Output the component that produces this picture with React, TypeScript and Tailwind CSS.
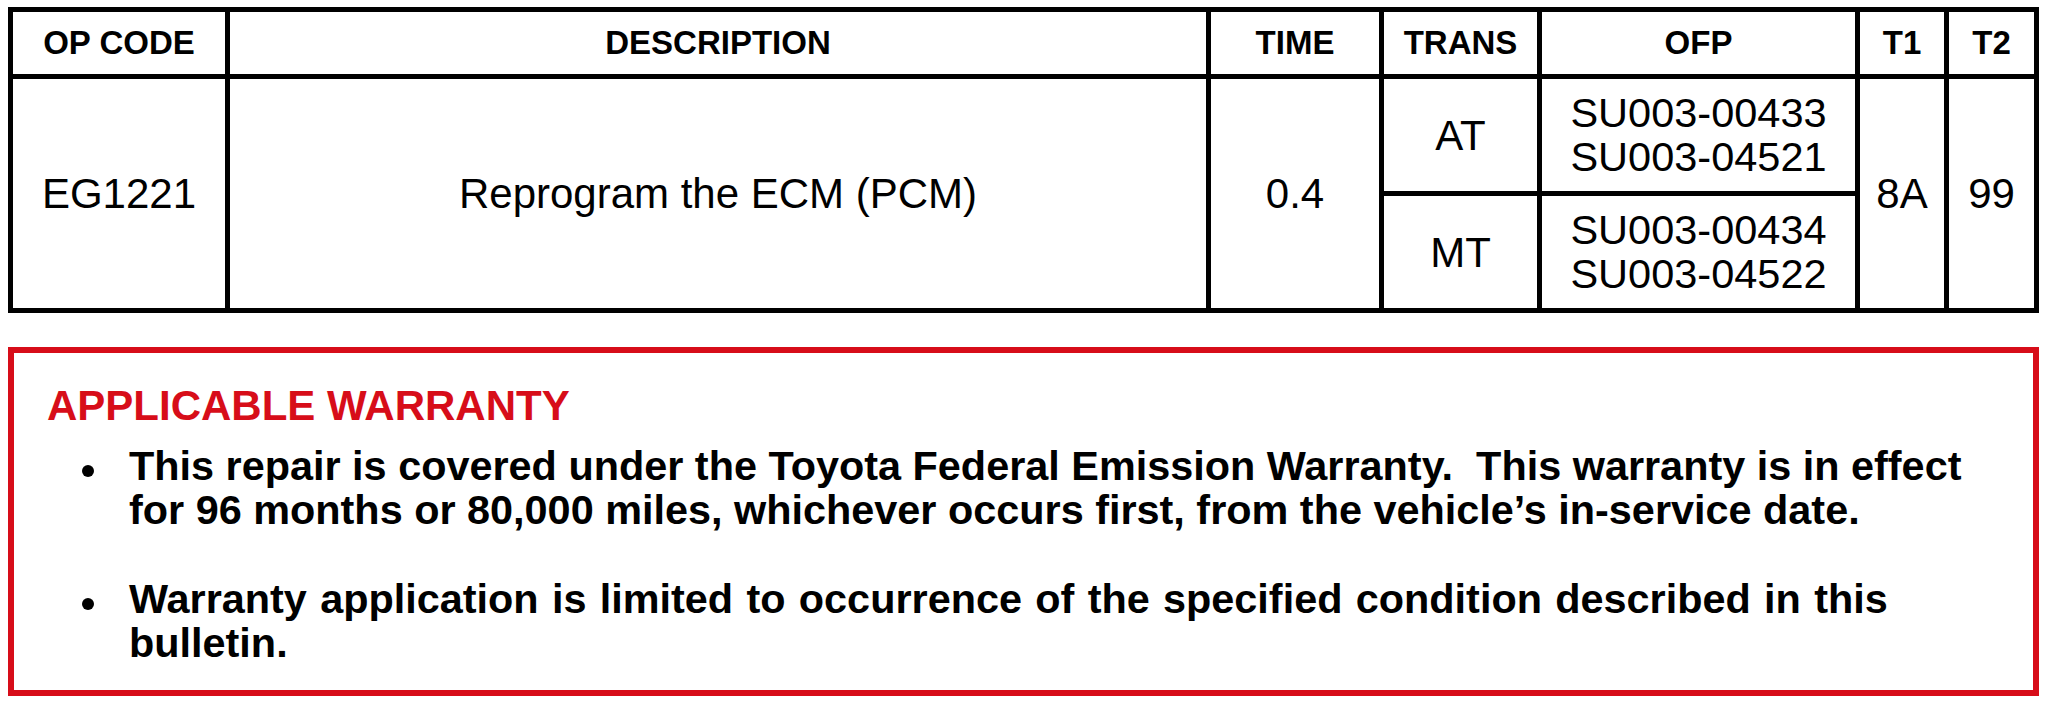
export default function App() {
  const head =
    "bg-white flex items-center justify-center text-[33px] font-bold";
  const cell = "bg-white flex items-center justify-center text-[42px]";
  const ofp =
    "bg-white flex flex-col items-center justify-center text-[41.5px] leading-[44px]";
  return (
    <div className="w-[2047px] h-[703px] bg-white text-black overflow-hidden font-['Liberation_Sans',Arial,sans-serif]">
      <div className="pt-[7px] pl-[8px]">
        <div className="grid w-[2031px] grid-cols-[212px_976px_168px_153px_313px_84px_85px] grid-rows-[62px_112px_112px] gap-[5px] bg-black p-[5px]">
          <div className={`${head} col-start-1 row-start-1`}>OP CODE</div>
          <div className={`${head} col-start-2 row-start-1`}>DESCRIPTION</div>
          <div className={`${head} col-start-3 row-start-1`}>TIME</div>
          <div className={`${head} col-start-4 row-start-1`}>TRANS</div>
          <div className={`${head} col-start-5 row-start-1`}>OFP</div>
          <div className={`${head} col-start-6 row-start-1`}>T1</div>
          <div className={`${head} col-start-7 row-start-1`}>T2</div>

          <div className={`${cell} col-start-1 row-start-2 row-span-2`}>EG1221</div>
          <div className={`${cell} col-start-2 row-start-2 row-span-2`}>
            Reprogram the ECM (PCM)
          </div>
          <div className={`${cell} col-start-3 row-start-2 row-span-2`}>0.4</div>
          <div className={`${cell} col-start-4 row-start-2`}>AT</div>
          <div className={`${ofp} col-start-5 row-start-2`}>
            <span>SU003-00433</span>
            <span>SU003-04521</span>
          </div>
          <div className={`${cell} col-start-6 row-start-2 row-span-2`}>8A</div>
          <div className={`${cell} col-start-7 row-start-2 row-span-2`}>99</div>
          <div className={`${cell} col-start-4 row-start-3`}>MT</div>
          <div className={`${ofp} col-start-5 row-start-3`}>
            <span>SU003-00434</span>
            <span>SU003-04522</span>
          </div>
        </div>
      </div>

      <div className="ml-[8px] mt-[34px] w-[2031px] h-[349px] border-[6px] border-[#d70d19] pt-[28px] pl-[33px] pr-[30px]">
        <div className="text-[42px] leading-[50px] font-bold text-[#d70d19]">
          APPLICABLE WARRANTY
        </div>
        <ul className="mt-[13px] flex flex-col gap-[45px] text-[41.4px] leading-[44px] font-bold">
          <li className="flex">
            <span className="w-[82px] shrink-0 pt-[21px] pl-[35px]">
              <span className="block w-[12px] h-[12px] rounded-full bg-black" />
            </span>
            <span>
              This repair is covered under the Toyota Federal Emission Warranty.{"\u00a0 "}This
              warranty is in effect for 96 months or 80,000 miles, whichever occurs first, from
              the vehicle’s in-service date.
            </span>
          </li>
          <li className="flex">
            <span className="w-[82px] shrink-0 pt-[21px] pl-[35px]">
              <span className="block w-[12px] h-[12px] rounded-full bg-black" />
            </span>
            <span className="[word-spacing:1.8px]">
              Warranty application is limited to occurrence of the specified condition described
              in this bulletin.
            </span>
          </li>
        </ul>
      </div>
    </div>
  );
}
